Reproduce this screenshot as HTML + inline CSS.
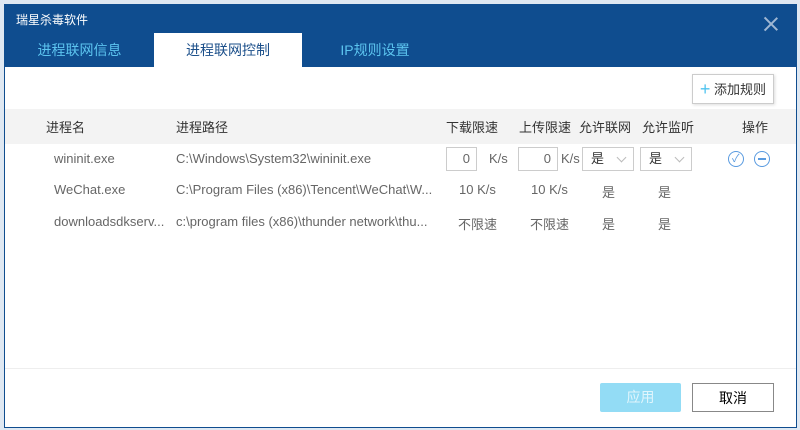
<!DOCTYPE html><html><head><meta charset="utf-8"><style>
*{margin:0;padding:0;box-sizing:border-box}
body{width:800px;height:430px;background:#dfe8f2;font-family:"Liberation Sans","Noto Sans CJK SC",sans-serif;font-size:13px;color:#333;position:relative;overflow:hidden}
.win{position:absolute;left:4px;top:4px;width:793px;height:424px;background:#fff;border:1px solid #0f4d8f}
.title{position:absolute;left:0;top:0;width:100%;height:62px;background:#0f4d8f}
.t{position:absolute;left:11px;top:6px;color:#fff;font-size:12px}
.x{position:absolute;right:18px;top:12px;width:14px;height:14px}
.x:before,.x:after{content:"";position:absolute;left:6px;top:-2px;width:1.5px;height:18px;background:#9fb7d3;transform:rotate(45deg)}
.x:after{transform:rotate(-45deg)}
.tab{position:absolute;top:28px;height:34px;line-height:34px;text-align:center;color:#5cc4ef;font-size:14px}
.tab.a{background:#fff;color:#1b4f8a}
.add{position:absolute;left:687px;top:69px;width:82px;height:30px;border:1px solid #ccc;box-shadow:1px 1px 3px #ddd;line-height:28px;text-align:center;color:#333}
.add b{color:#4fc3ef;font-size:18px;font-weight:normal;vertical-align:-1px}
.hdr{position:absolute;left:0;top:104px;width:100%;height:35px;background:#f3f3f3}
.c{position:absolute;white-space:nowrap}
.g{color:#666}
.in{position:absolute;height:24px;border:1px solid #ccc;text-align:right;padding-right:6px;line-height:22px;color:#666}
.sel{position:absolute;height:24px;width:52px;border:1px solid #ccc;line-height:22px;padding-left:8px;color:#333}
.sel:after{content:"";position:absolute;right:8px;top:6px;width:6px;height:6px;border-right:1px solid #bbb;border-bottom:1px solid #bbb;transform:rotate(45deg)}
.ic{position:absolute;width:16px;height:16px;border:1.5px solid #5a9be0;border-radius:50%}
.line{position:absolute;left:0;top:363px;width:100%;height:1px;background:#eee}
.btn{position:absolute;top:378px;height:29px;line-height:29px;text-align:center;font-size:14px}
</style></head><body><div class="win">
<div class="title"><div class="t">瑞星杀毒软件</div><div class="x"></div>
<div class="tab" style="left:0;width:149px">进程联网信息</div>
<div class="tab a" style="left:149px;width:148px">进程联网控制</div>
<div class="tab" style="left:297px;width:146px">IP规则设置</div></div>
<div class="add"><b>+</b> 添加规则</div>
<div class="hdr"></div>
<div class="c" style="left:41px;top:112px">进程名</div>
<div class="c" style="left:171px;top:112px">进程路径</div>
<div class="c" style="left:441px;top:112px">下载限速</div>
<div class="c" style="left:514px;top:112px">上传限速</div>
<div class="c" style="left:574px;top:112px">允许联网</div>
<div class="c" style="left:637px;top:112px">允许监听</div>
<div class="c" style="left:737px;top:112px">操作</div>

<div class="c g" style="left:49px;top:146px">wininit.exe</div>
<div class="c g" style="left:171px;top:146px">C:\Windows\System32\wininit.exe</div>
<div class="in" style="left:441px;top:142px;width:31px">0</div><div class="c g" style="left:484px;top:146px">K/s</div>
<div class="in" style="left:513px;top:142px;width:40px">0</div><div class="c g" style="left:556px;top:146px">K/s</div>
<div class="sel" style="left:577px;top:142px">是</div>
<div class="sel" style="left:635px;top:142px">是</div>
<div class="ic" style="left:723px;top:146px"></div><div class="c" style="left:727px;top:145px;color:#5a9be0;font-size:11px">✓</div>
<div class="ic" style="left:749px;top:146px"></div><div style="position:absolute;left:753px;top:153px;width:8px;height:2px;background:#5a9be0"></div>

<div class="c g" style="left:49px;top:177px">WeChat.exe</div>
<div class="c g" style="left:171px;top:177px">C:\Program Files (x86)\Tencent\WeChat\W...</div>
<div class="c g" style="left:454px;top:177px">10 K/s</div><div class="c g" style="left:526px;top:177px">10 K/s</div>
<div class="c g" style="left:597px;top:177px">是</div><div class="c g" style="left:653px;top:177px">是</div>
<div class="c g" style="left:49px;top:209px">downloadsdkserv...</div>
<div class="c g" style="left:171px;top:209px">c:\program files (x86)\thunder network\thu...</div>
<div class="c g" style="left:453px;top:209px">不限速</div><div class="c g" style="left:525px;top:209px">不限速</div>
<div class="c g" style="left:597px;top:209px">是</div><div class="c g" style="left:653px;top:209px">是</div>
<div class="line"></div>
<div class="btn" style="left:595px;width:81px;background:#93dcf5;color:#e0f5fc;border-radius:2px">应用</div>
<div class="btn" style="left:687px;width:82px;border:1px solid #888;color:#000">取消</div>
</div></body></html>
